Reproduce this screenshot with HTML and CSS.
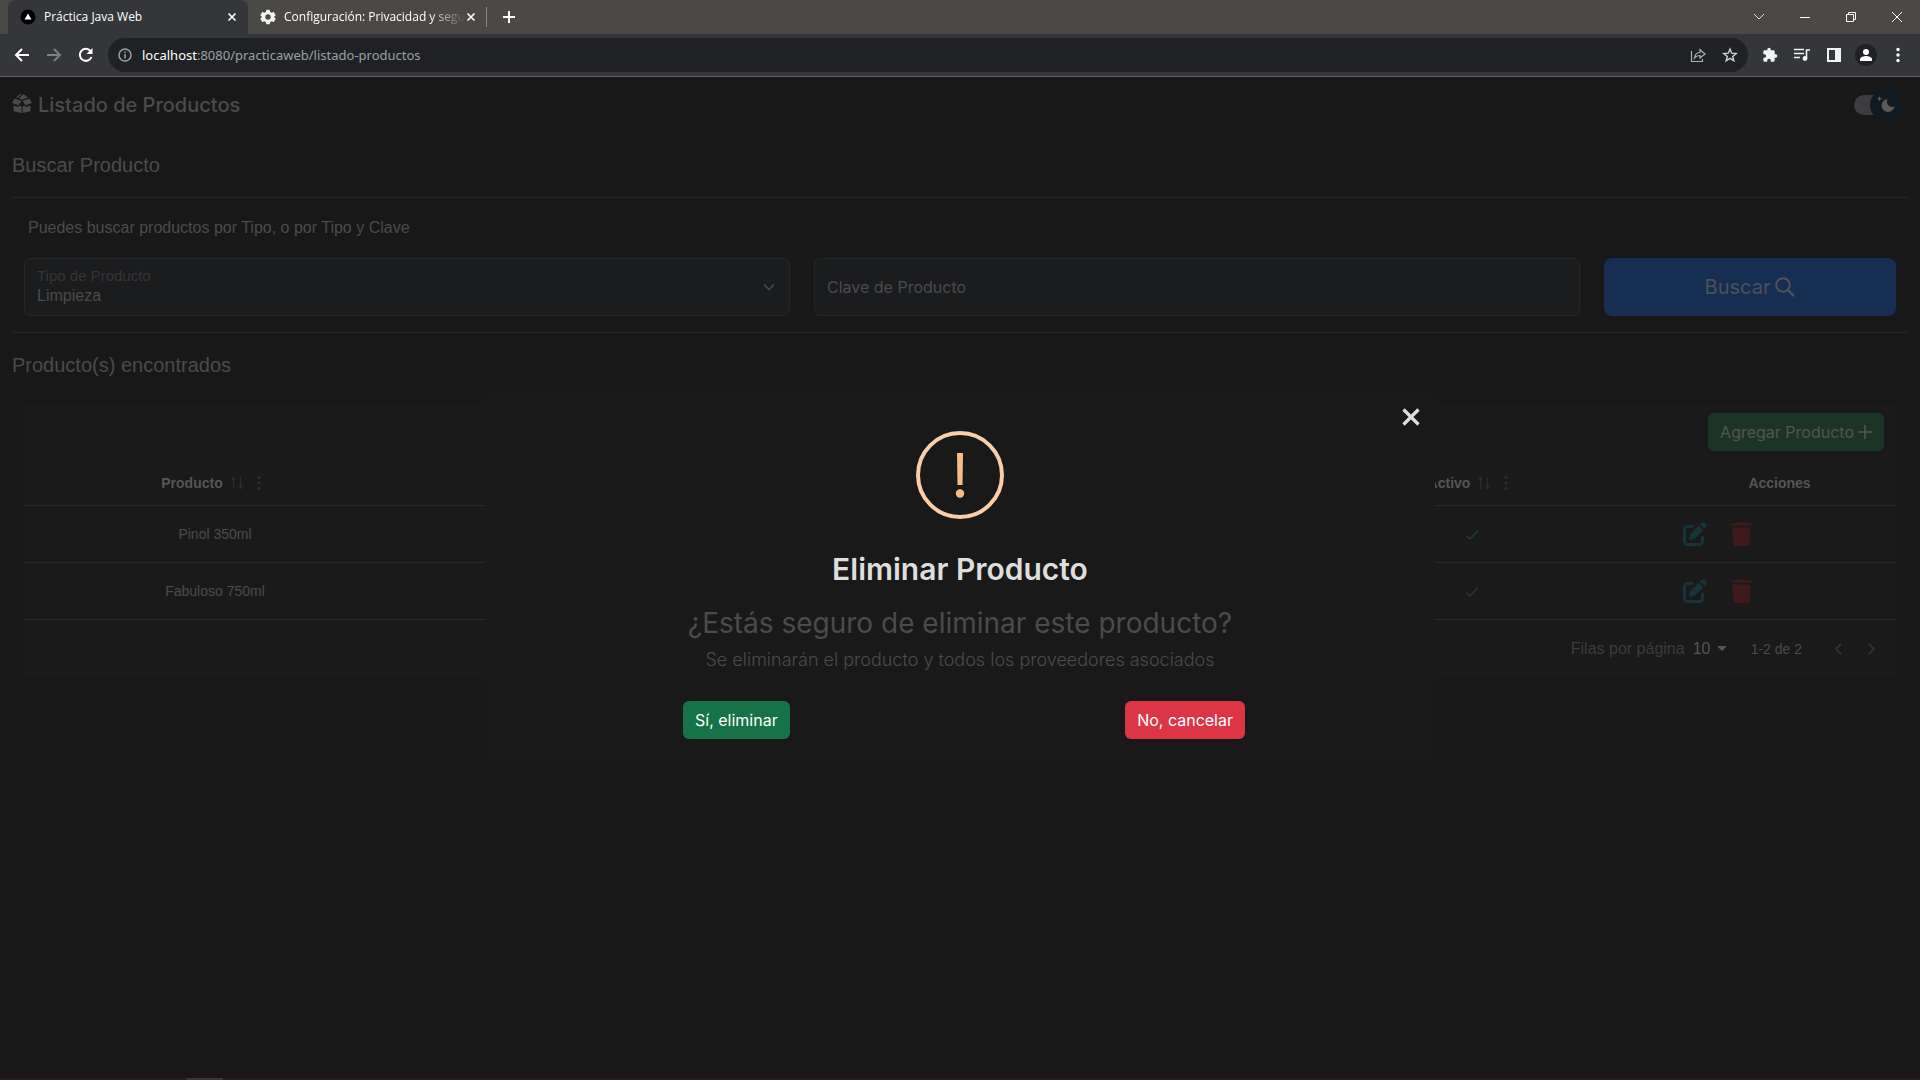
FILE: index.html
```html
<!DOCTYPE html>
<html lang="es">
<head>
<meta charset="utf-8">
<title>Práctica Java Web</title>
<link rel="stylesheet" href="styles.css">
</head>
<body>
<svg class="defs" aria-hidden="true">
  <symbol id="edit" viewBox="0 0 512 512"><path fill="currentColor" d="M471.600 21.700c-21.900-21.900-57.300-21.900-79.200 0L362.300 51.700l97.900 97.900 30.100-30.100c21.900-21.900 21.900-57.300 0-79.200L471.600 21.700zm-299.200 220c-6.100 6.100-10.800 13.600-13.500 21.900l-29.600 88.800c-2.900 8.600-.6 18.100 5.800 24.600s15.900 8.700 24.600 5.800l88.800-29.600c8.200-2.700 15.700-7.400 21.900-13.500L437.700 172.300 339.700 74.300 172.400 241.700zM96 64C43 64 0 107 0 160V416c0 53 43 96 96 96H352c53 0 96-43 96-96V320c0-17.700-14.300-32-32-32s-32 14.300-32 32v96c0 17.700-14.300 32-32 32H96c-17.700 0-32-14.300-32-32V160c0-17.700 14.300-32 32-32h96c17.700 0 32-14.300 32-32s-14.300-32-32-32H96z"/></symbol>
  <symbol id="trash" viewBox="0 0 448 512"><path fill="currentColor" d="M135.200 17.700C140.600 6.800 151.700 0 163.800 0H284.200c12.100 0 23.200 6.800 28.600 17.700L320 24h104a24 24 0 0 1 24 24v32H0V48a24 24 0 0 1 24-24h104zM32 116H416L398 466c-2 26-24 46-50 46H100c-26 0-48-20-50-46z"/></symbol>
  <symbol id="check" viewBox="0 0 14 14"><path d="M1.500 7.500 5 11l8-8.500" fill="none" stroke="currentColor" stroke-width="1.400"/></symbol>
  <symbol id="sort" viewBox="0 0 12 14"><path d="M2.500 13V2M9.500 1v11" fill="none" stroke="currentColor" stroke-width="1.300"/><path d="M0 3.500 2.500.5 5 3.500zM7 10.500l2.500 3 2.500-3z" fill="currentColor"/></symbol>
  <symbol id="dots" viewBox="0 0 4 16"><g fill="currentColor"><circle cx="2" cy="2.500" r="1.700"/><circle cx="2" cy="8" r="1.700"/><circle cx="2" cy="13.500" r="1.700"/></g></symbol>
  <symbol id="close" viewBox="0 0 10 10"><path d="m1.500 1.500 7 7m0-7-7 7" fill="none" stroke="currentColor" stroke-width="1.600"/></symbol>
</svg>

<header class="browser">
  <div class="tabstrip">
    <div class="tab tab-active">
      <svg class="favicon" viewBox="0 0 16 16"><circle cx="8" cy="8" r="7.500" fill="#000"/><path d="m8 4.500 3.500 6h-7z" fill="#fff"/></svg>
      <span class="tab-title">Práctica Java Web</span>
      <button class="tab-close" aria-label="Cerrar pestaña"><svg width="10" height="10"><use href="#close"/></svg></button>
    </div>
    <div class="tab">
      <svg class="favicon" viewBox="0 0 24 24"><path fill="#f1f3f4" d="M21 12l2.500-2.500-2.800-5-3.500 1-2-1.200L14.400 1H9.600l-.8 3.300-2 1.200-3.500-1-2.800 5L3 12 .5 14.500l2.800 5 3.500-1 2 1.200.8 3.300h4.800l.8-3.300 2-1.200 3.500 1 2.800-5z"/><circle cx="12" cy="12" r="4" fill="#4b4945"/></svg>
      <span class="tab-title tab-fade">Configuración: Privacidad y segu</span>
      <button class="tab-close" aria-label="Cerrar pestaña"><svg width="10" height="10"><use href="#close"/></svg></button>
    </div>
    <button class="new-tab" aria-label="Nueva pestaña"><svg width="12" height="12" viewBox="0 0 12 12"><path d="M6 0v12M0 6h12" stroke="#fff" stroke-width="2"/></svg></button>
    <div class="window-controls">
      <button aria-label="Buscar pestañas"><svg width="12" height="12" viewBox="0 0 12 12"><path d="m1 3 5 5 5-5" fill="none" stroke="#ddd"/></svg></button>
      <button aria-label="Minimizar"><svg width="12" height="12" viewBox="0 0 12 12"><path d="M1 6.500h10" stroke="#fff"/></svg></button>
      <button aria-label="Restaurar"><svg width="12" height="12" viewBox="0 0 12 12"><path d="M1.500 3.500h7v7h-7zM3.500 3.500v-2h7v7h-2" fill="none" stroke="#fff"/></svg></button>
      <button aria-label="Cerrar"><svg width="12" height="12" viewBox="0 0 12 12"><path d="m1 1 10 10M11 1 1 11" stroke="#fff"/></svg></button>
    </div>
  </div>
  <div class="toolbar">
    <button class="nav-button" aria-label="Atrás"><svg width="16" height="16" viewBox="0 0 16 16"><path d="M15 8H2m6-6L2 8l6 6" fill="none" stroke="#fff" stroke-width="2"/></svg></button>
    <button class="nav-button" aria-label="Adelante"><svg width="16" height="16" viewBox="0 0 16 16"><path d="M1 8h13M8 2l6 6-6 6" fill="none" stroke="#7d7e81" stroke-width="2"/></svg></button>
    <button class="nav-button" aria-label="Recargar"><svg width="16" height="16" viewBox="0 0 16 16"><path d="M13.500 10A6 6 0 1 1 12.500 4" fill="none" stroke="#fff" stroke-width="2"/><path d="M14.500 1v6h-6z" fill="#fff"/></svg></button>
    <div class="omnibox">
      <svg width="14" height="14" viewBox="0 0 14 14"><circle cx="7" cy="7" r="6" fill="none" stroke="#9aa0a6" stroke-width="1.500"/><path d="M7 6v4.500M7 3.500V5" stroke="#9aa0a6" stroke-width="1.500"/></svg>
      <span class="address"><span class="host">localhost</span>:8080/practicaweb/listado-productos</span>
      <button aria-label="Compartir"><svg width="16" height="16" viewBox="0 0 16 16"><path d="M1.500 4v10.500h11V12M4.500 11c.5-4 2.500-5.500 5.500-5.500V2.500L15 7l-5 4V8.500c-2.500 0-4 .5-5.500 2.500z" fill="none" stroke="#b0b2b5" stroke-width="1.200"/></svg></button>
      <button aria-label="Favorito"><svg width="16" height="16" viewBox="0 0 16 16"><path d="m8 2 1.700 4.200 4.500.3-3.500 2.900 1.100 4.400L8 11.400l-3.800 2.400 1.100-4.400-3.500-2.900 4.500-.3z" fill="none" stroke="#d0d2d4" stroke-width="1.400"/></svg></button>
    </div>
    <div class="extensions">
      <button aria-label="Extensiones"><svg width="16" height="16" viewBox="0 0 24 24"><path fill="#f1f3f4" d="M20.500 11H19V7a2 2 0 0 0-2-2h-4V3.500a2.500 2.500 0 0 0-5 0V5H4a2 2 0 0 0-2 2v3.800h1.500a2.700 2.700 0 0 1 0 5.400H2V20a2 2 0 0 0 2 2h3.800v-1.500a2.700 2.700 0 0 1 5.400 0V22H17a2 2 0 0 0 2-2v-4h1.500a2.500 2.500 0 0 0 0-5z"/></svg></button>
      <button aria-label="Multimedia"><svg width="16" height="16" viewBox="0 0 16 16"><path d="M0 2.500h10M0 6.500h10M0 10.500h6M12.500 11V3H16" fill="none" stroke="#f1f3f4" stroke-width="1.600"/><circle cx="11" cy="11.500" r="2.400" fill="#f1f3f4"/></svg></button>
      <button aria-label="Panel lateral"><svg width="16" height="16" viewBox="0 0 16 16"><path fill="#f1f3f4" d="M1 1h14v14H1zm2 2v10h6V3z" fill-rule="evenodd"/></svg></button>
      <button class="avatar" aria-label="Perfil"><svg width="14" height="14" viewBox="0 0 14 14"><circle cx="7" cy="4" r="3" fill="#fff"/><path d="M1 13v-2c0-2 4-3 6-3s6 1 6 3v2z" fill="#fff"/></svg></button>
      <button aria-label="Menú"><svg class="menu-dots" width="4" height="16"><use href="#dots"/></svg></button>
    </div>
  </div>
</header>

<main class="page">
  <div class="page-head">
    <h1 class="brand">
      <svg width="20" height="20" viewBox="0 0 20 20"><path fill="currentColor" d="M1.500 12.500 6 14l1.500-1.500 2 1V20l-7-1.400q-1-.3-1-1.200zM18.500 12.500 14 14l-1.500-1.500-2 1V20l7-1.400q1-.3 1-1.200zM2.500 5.500 9.500 8 6.500 12.300 0 10zM17.500 5.500 10.500 8l3 4.300L20 10zM4 4.500 8.500.8l1 .8-4 3.500zM6.800 5.500 11.500 1l4.500 3.500-6 2.300z"/></svg>
      Listado de Productos
    </h1>
    <label class="theme-switch">
      <input type="checkbox" checked aria-label="Modo oscuro">
      <span class="theme-thumb"><svg width="18" height="18" viewBox="0 0 18 18"><path fill="#5c5957" d="M10.500 3a6.500 6.500 0 1 0 7 7.500A5.500 5.500 0 0 1 10.500 3z"/><path fill="#5c5957" d="m2.500 0 .8 2 2 .7-2 .8-.8 2-.8-2-2-.8 2-.7z"/></svg></span>
    </label>
  </div>

  <h2 class="section-title search-title">Buscar Producto</h2>
  <section class="search">
    <p class="hint">Puedes buscar productos por Tipo, o por Tipo y Clave</p>
    <form class="search-form">
      <div class="field">
        <label for="tipo">Tipo de Producto</label>
        <select id="tipo"><option>Limpieza</option></select>
        <svg class="chevron" width="12" height="12" viewBox="0 0 12 12"><path d="m1 3.500 5 5 5-5" fill="none" stroke="#4b4b4b" stroke-width="1.500"/></svg>
      </div>
      <input class="field key-field" type="text" placeholder="Clave de Producto" aria-label="Clave de Producto">
      <button class="search-button" type="button">Buscar <svg width="20" height="20" viewBox="0 0 20 20"><circle cx="8" cy="8" r="6.800" fill="none" stroke="currentColor" stroke-width="2"/><path d="m13 13 6 6" stroke="currentColor" stroke-width="2.500"/></svg></button>
    </form>
  </section>

  <h2 class="section-title">Producto(s) encontrados</h2>
  <section class="results">
    <div class="results-head"><button class="add-button">Agregar Producto <svg width="14" height="14" viewBox="0 0 14 14"><path d="M7 0v14M0 7h14" stroke="currentColor" stroke-width="1.600"/></svg></button></div>
    <table>
      <colgroup><col class="col-wide"><col><col><col class="col-wide"><col class="col-actions"></colgroup>
      <thead>
        <tr>
          <th><span class="column-head">Producto <svg width="12" height="14"><use href="#sort"/></svg><svg class="column-menu" width="4" height="16"><use href="#dots"/></svg></span></th>
          <th></th>
          <th></th>
          <th><span class="column-head">Activo <svg width="12" height="14"><use href="#sort"/></svg><svg class="column-menu" width="4" height="16"><use href="#dots"/></svg></span></th>
          <th>Acciones</th>
        </tr>
      </thead>
      <tbody>
        <tr>
          <td>Pinol 350ml</td><td></td><td></td>
          <td class="active-cell"><svg width="14" height="14"><use href="#check"/></svg></td>
          <td><div class="actions"><button class="edit" aria-label="Editar"><svg width="24" height="24"><use href="#edit"/></svg></button><button class="delete" aria-label="Eliminar"><svg width="21" height="24"><use href="#trash"/></svg></button></div></td>
        </tr>
        <tr>
          <td>Fabuloso 750ml</td><td></td><td></td>
          <td class="active-cell"><svg width="14" height="14"><use href="#check"/></svg></td>
          <td><div class="actions"><button class="edit" aria-label="Editar"><svg width="24" height="24"><use href="#edit"/></svg></button><button class="delete" aria-label="Eliminar"><svg width="21" height="24"><use href="#trash"/></svg></button></div></td>
        </tr>
      </tbody>
    </table>
    <div class="pagination">
      <label for="filas">Filas por página</label>
      <div class="rows"><select id="filas"><option>10</option></select><svg width="10" height="6" viewBox="0 0 10 6"><path d="M0 0h10L5 5z" fill="#555"/></svg></div>
      <span class="range">1-2 de 2</span>
      <button aria-label="Anterior"><svg width="8" height="12" viewBox="0 0 8 12"><path d="M7 1 2 6l5 5" fill="none" stroke="#333" stroke-width="1.800"/></svg></button>
      <button aria-label="Siguiente"><svg width="8" height="12" viewBox="0 0 8 12"><path d="m1 1 5 5-5 5" fill="none" stroke="#333" stroke-width="1.800"/></svg></button>
    </div>
  </section>

  <div class="overlay">
    <div class="dialog" role="dialog" aria-labelledby="dialog-title">
      <button class="dialog-close" aria-label="Cerrar"><svg width="18" height="18" viewBox="0 0 18 18"><path d="m1.500 1.500 15 15m0-15-15 15" stroke="#dedede" stroke-width="3.200"/></svg></button>
      <svg width="88" height="88" viewBox="0 0 88 88"><circle cx="44" cy="44" r="42" fill="none" stroke="#facea8" stroke-width="4"/><path d="M41 22h6l-.5 32h-5z" fill="#f8bb86"/><circle cx="44" cy="62.500" r="4.200" fill="#f8bb86"/></svg>
      <h2 id="dialog-title">Eliminar Producto</h2>
      <p class="question">¿Estás seguro de eliminar este producto?</p>
      <p class="detail">Se eliminarán el producto y todos los proveedores asociados</p>
      <div class="dialog-actions">
        <button class="confirm">Sí, eliminar</button>
        <button class="cancel">No, cancelar</button>
      </div>
    </div>
  </div>
</main>
<footer class="taskbar"><span></span></footer>
</body>
</html>
```

FILE: styles.css
```css
* { box-sizing: border-box; }
body {
  margin: 0;
  min-height: 100vh;
  display: flex;
  flex-direction: column;
  background: #181818;
  color: #4b4b4b;
  font: 16px/24px "Liberation Sans", Arial, sans-serif;
  font-optical-sizing: none;
}
h1, h2, p { margin: 0; font-weight: 400; }
button, input, select { font: inherit; font-optical-sizing: none; color: inherit; border: 0; padding: 0; background: none; }
button { display: flex; align-items: center; justify-content: center; }
svg { display: block; flex: none; }
.defs { display: none; }

/* Browser frame */
.browser { font: 12px/16px "Open Sans", "Noto Sans", sans-serif; border-bottom: 1px solid #606165; }
.tabstrip { display: flex; align-items: center; height: 34px; padding-left: 8px; background: #4b4945; }
.tab { display: flex; align-items: center; width: 238px; height: 34px; padding: 0 8px 0 12px; color: #fff; }
.tab-active { width: 240px; background: #35363a; border-radius: 8px 8px 0 0; }
.favicon { width: 16px; height: 16px; margin-right: 8px; }
.tab-title { flex: 1; white-space: nowrap; }
.tab-fade { mask-image: linear-gradient(to right, #000 80%, transparent); }
.tab-close { width: 16px; height: 16px; color: #fff; }
.new-tab { height: 20px; padding: 0 16px; border-left: 1px solid #8a8885; }
.window-controls { display: flex; margin-left: auto; }
.window-controls button { width: 46px; height: 30px; }
.toolbar { display: flex; align-items: center; height: 42px; padding: 0 8px; background: #35363a; }
.nav-button { width: 28px; height: 28px; margin-right: 4px; }
.omnibox { display: flex; align-items: center; flex: 1; gap: 16px; height: 34px; margin-left: 4px; padding: 0 10px; border-radius: 17px; background: #202124; }
.address { flex: 1; margin-left: -6px; color: #9aa0a6; font: 13px/18px "Noto Sans", sans-serif; }
.host { color: #fff; }
.extensions { display: flex; align-items: center; gap: 16px; margin-left: 14px; padding-right: 6px; }
.extensions .avatar { width: 22px; height: 22px; margin: 0 -3px; border-radius: 50%; background: #202124; }
.extensions button:last-child { width: 16px; }
.menu-dots { color: #fff; }

/* Page */
.page { position: relative; flex: 1; padding: 12px; }
.page-head { display: flex; align-items: center; justify-content: space-between; height: 32px; padding-right: 6px; }
.brand { display: flex; align-items: flex-start; gap: 6px; font: 500 20px/24px Inter, sans-serif; font-optical-sizing: none; }
.theme-switch { display: flex; align-items: center; }
.theme-switch input { appearance: none; width: 32px; height: 20px; margin: 0; border-radius: 10px; background: #3d3d40; }
.theme-thumb { display: flex; align-items: center; justify-content: center; width: 32px; height: 32px; margin-left: -16px; border-radius: 50%; background: #101a22; z-index: 1; }
.section-title { font-size: 20px; line-height: 24px; }
.search-title { margin: 32px 0 20px; }
.search { margin-bottom: 20px; padding: 16px 12px; border: 1px solid #252525; border-width: 1px 0; }
.hint { margin: 2px 4px 18px; }
.search-form { display: grid; grid-template-columns: 766fr 766fr 292fr; gap: 24px; }
.field { position: relative; height: 58px; border: 1px solid #252627; border-radius: 6px; background: #1b1c1e; }
.field label { position: absolute; left: 12px; top: 5px; color: #353535; font-size: 15px; pointer-events: none; }
.field select { appearance: none; width: 100%; height: 56px; padding: 18px 12px 0; }
.chevron { position: absolute; right: 14px; top: 22px; }
.key-field { width: 100%; padding: 0 12px; font-family: Inter, sans-serif; }
.key-field::placeholder { color: #4b4b4b; opacity: 1; }
.search-button { gap: 5px; border-radius: 8px; background: #172e53; font: 20px/24px Inter, sans-serif; color: #4e5258; }

/* Results */
.results { margin: 28px 12px 0; border-radius: 4px; background: #1a1a1a; }
.results-head { display: flex; justify-content: flex-end; padding: 8px 12px; }
.add-button { gap: 4px; height: 38px; padding: 0 12px; border-radius: 6px; background: #1a3426; font: 16px/24px Inter, sans-serif; color: #55564f; }
table { width: 100%; table-layout: fixed; border-collapse: collapse; font-size: 14px; text-align: center; }
.col-wide { width: 382px; }
.col-actions { width: 233px; }
th, td { height: 57px; padding: 0; border-bottom: 1px solid #282828; }
th { height: 46px; padding-top: 2px; color: #555; }
.column-head { display: inline-flex; align-items: center; gap: 8px; padding-right: 8px; }
.column-head svg { color: #2c2c2c; }
.column-head .column-menu { margin-left: 6px; }
.active-cell svg { display: inline-block; color: #1c4429; vertical-align: middle; }
.actions { display: flex; gap: 24px; padding-left: 20px; }
.edit { color: #17333b; }
.delete { color: #3e1a1d; }
.pagination { display: flex; align-items: center; justify-content: flex-end; height: 56px; padding: 2px 16px 0 0; color: #3c3c3c; }
.rows { display: flex; align-items: center; gap: 6px; margin-left: 8px; }
.rows select { appearance: none; color: #555; }
.range { margin: 0 24px; color: #4b4b4b; font-size: 14px; }
.pagination button { width: 16px; height: 24px; margin-left: 4px; }
.pagination button + button { margin-left: 18px; }

/* Confirmation dialog */
.overlay { position: absolute; inset: 0; display: flex; justify-content: center; align-items: flex-start; padding-top: 314px; }
.dialog { position: relative; display: flex; flex-direction: column; align-items: center; width: 950px; padding: 40px 24px 24px; border-radius: 8px; background: #191919; font-family: Inter, sans-serif; }
.dialog-close { position: absolute; top: 14px; right: 12px; width: 24px; height: 24px; }
.dialog h2 { margin-top: 28px; font-size: 30px; line-height: 44px; font-weight: 600; color: #dedede; }
.question { margin-top: 14px; font-size: 28px; line-height: 36px; }
.detail { margin-top: 6px; font-size: 18px; line-height: 26px; font-weight: 300; }
.dialog-actions { display: flex; justify-content: space-between; width: 562px; margin: 28px 0 0 8px; }
.dialog-actions button { height: 38px; padding: 0 12px; border-radius: 6px; color: #fff; }
.confirm { background: #157347; }
.cancel { background: #dc3545; }

.taskbar { height: 2px; padding-left: 187px; background: #231f20; }
.taskbar span { display: block; width: 36px; height: 2px; background: #393536; }
```
